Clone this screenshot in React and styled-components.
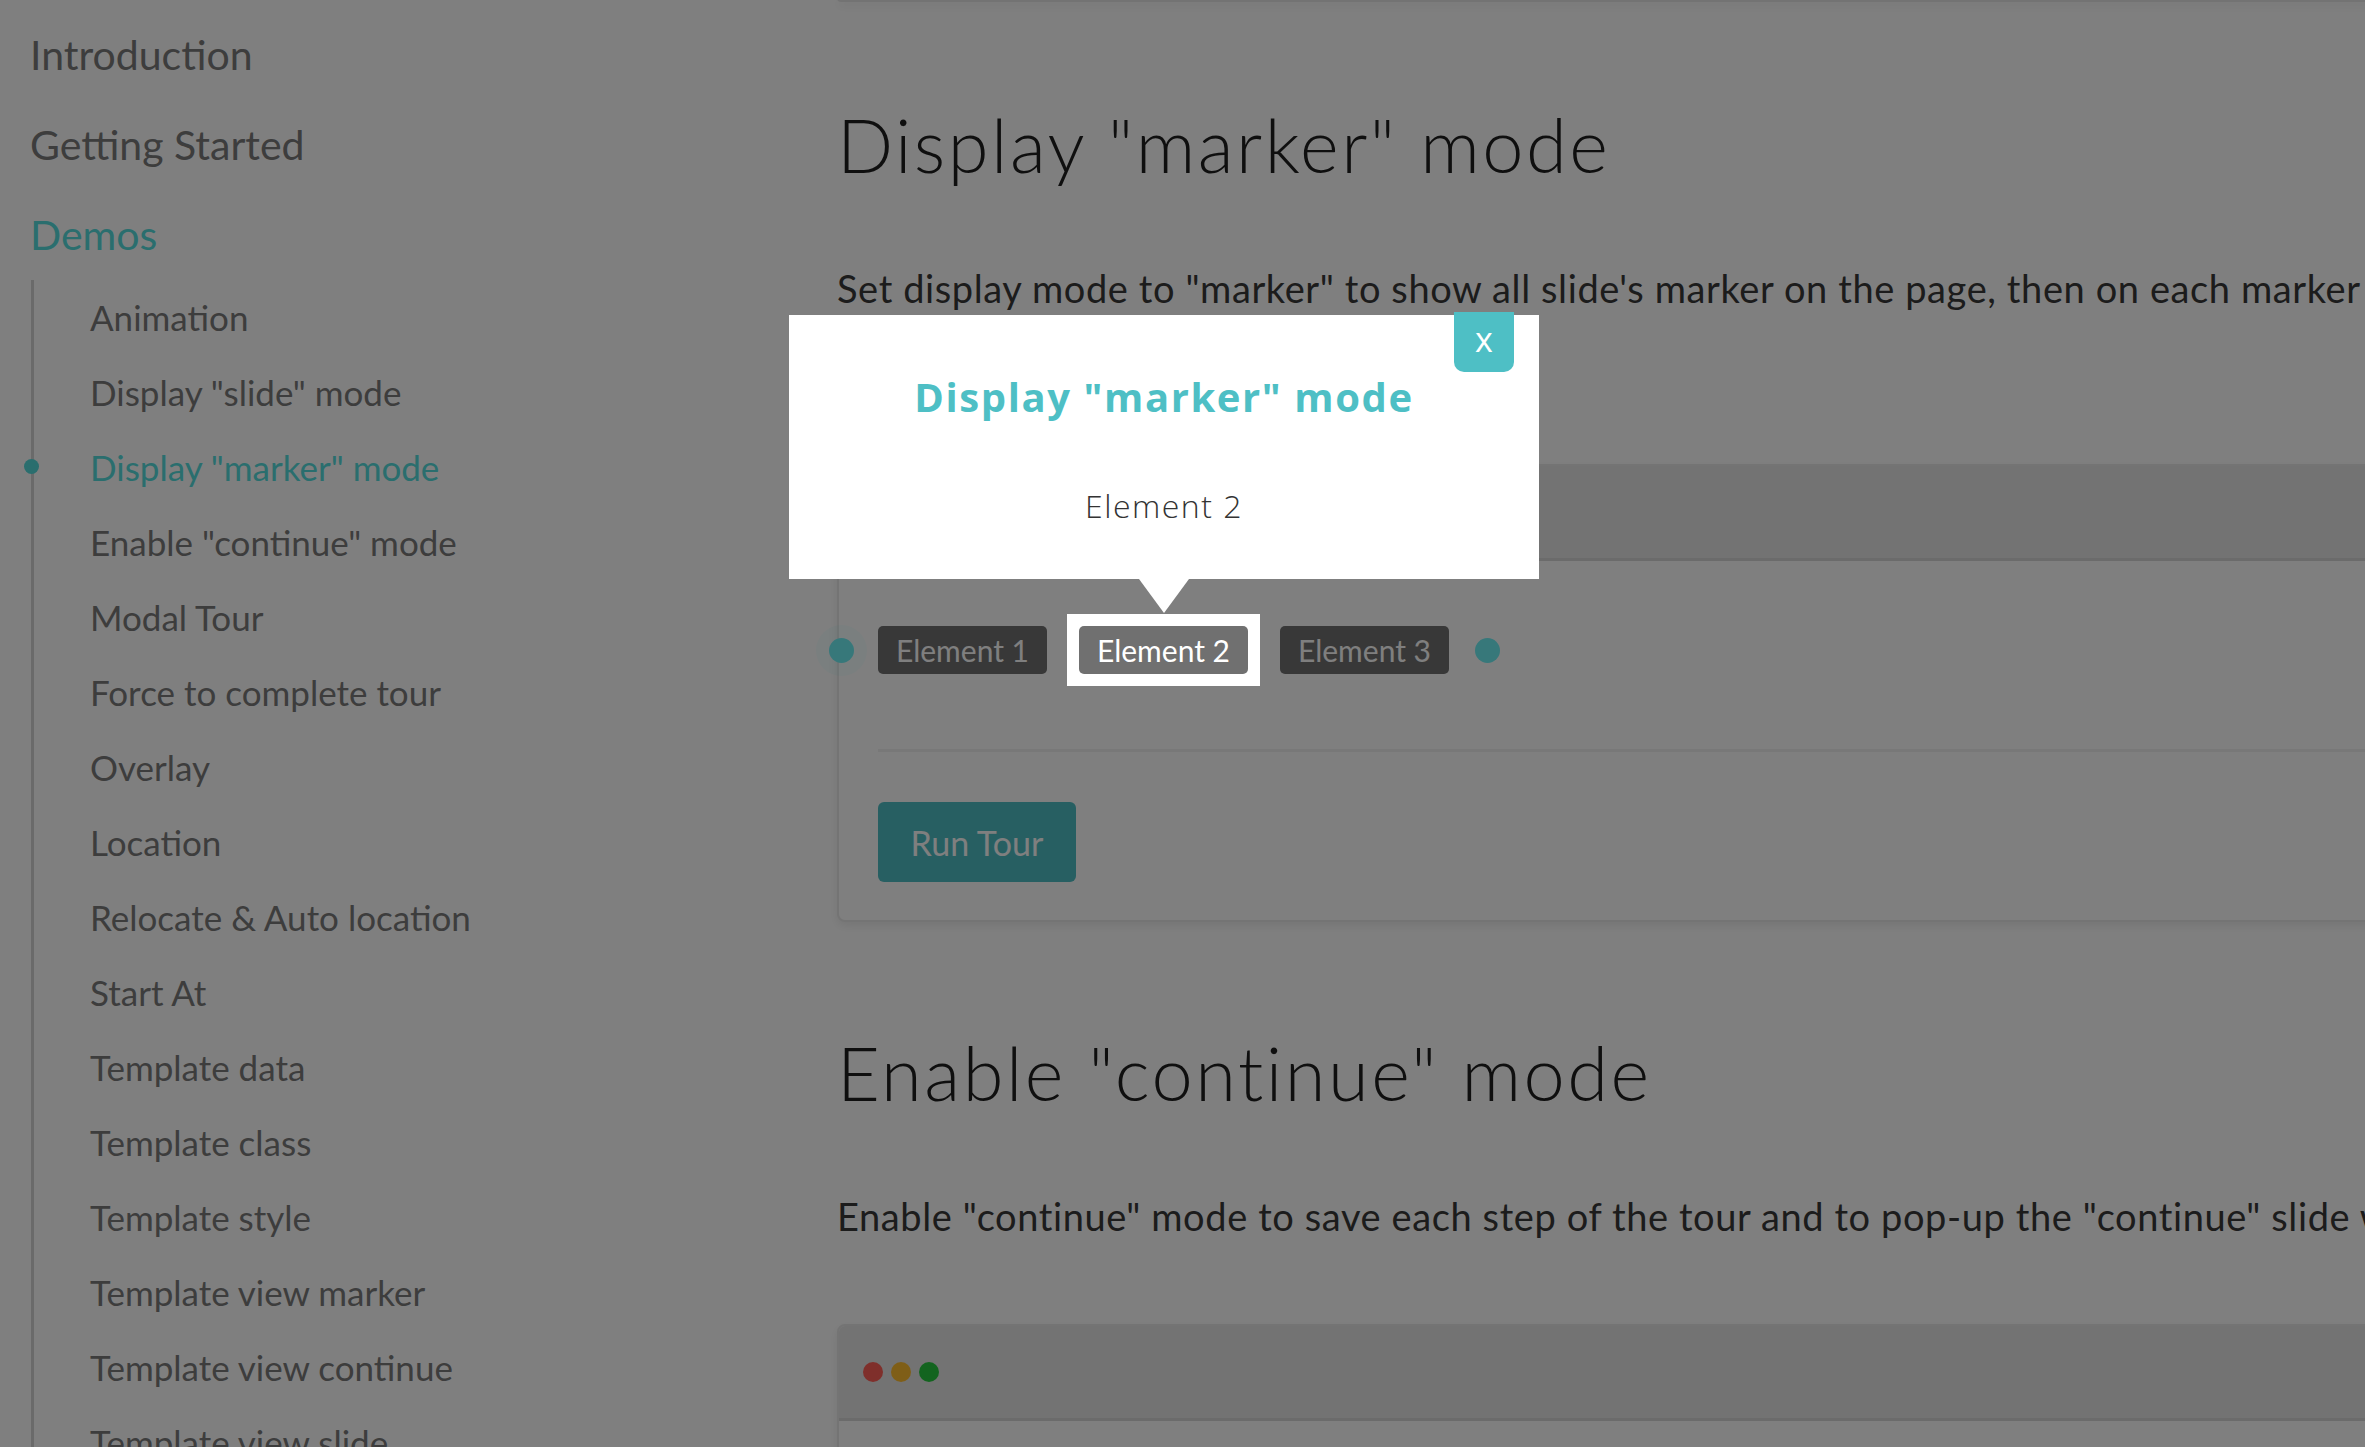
import React from "react";
import styled, { createGlobalStyle } from "styled-components";

const TEAL = "#4ebfc5";
const NAV_TEAL = "#54dcdc";

const GlobalStyle = createGlobalStyle`
  html, body {
    margin: 0;
    padding: 0;
    background: #fff;
  }
  body {
    font-family: Lato, "Liberation Sans", sans-serif;
  }
  * {
    box-sizing: border-box;
  }
`;

const topLinks = [
  { label: "Introduction" },
  { label: "Getting Started" },
  { label: "Demos", active: true },
];

const demoLinks = [
  "Animation",
  'Display "slide" mode',
  'Display "marker" mode',
  'Enable "continue" mode',
  "Modal Tour",
  "Force to complete tour",
  "Overlay",
  "Location",
  "Relocate & Auto location",
  "Start At",
  "Template data",
  "Template class",
  "Template style",
  "Template view marker",
  "Template view continue",
  "Template view slide",
];

const App = () => {
  return (
    <>
      <GlobalStyle />
      <Page>
        <Sidebar>
          {topLinks.map((l) => (
            <TopLink key={l.label} $active={l.active}>
              {l.label}
            </TopLink>
          ))}
          <SubList>
            {demoLinks.map((l) => (
              <SubLink key={l} $active={l === 'Display "marker" mode'}>
                {l}
              </SubLink>
            ))}
          </SubList>
        </Sidebar>

        <Main>
          <PrevCard />
          <Section $top={98}>
            <Heading>Display "marker" mode</Heading>
            <Lead $lines={2}>
              Set display mode to "marker" to show all slide's marker on the
              page, then on each marker
            </Lead>
            <Card>
              <CardHeader />
              <CardBody>
                <ElementRow>
                  <Marker $side="left" />
                  <ElementButton>Element 1</ElementButton>
                  <Highlight>
                    <ElementButton>Element 2</ElementButton>
                  </Highlight>
                  <ElementButton>Element 3</ElementButton>
                  <Marker $side="right" />
                </ElementRow>
                <Divider />
                <RunButton>Run Tour</RunButton>
              </CardBody>
            </Card>
          </Section>

          <Section $top={106}>
            <Heading>Enable "continue" mode</Heading>
            <Lead $lines={1}>
              Enable "continue" mode to save each step of the tour and to
              pop-up the "continue" slide when
            </Lead>
            <Card>
              <CardHeader>
                <Light $color="#ff5f56" />
                <Light $color="#ffbd2e" />
                <Light $color="#27c93f" />
              </CardHeader>
              <CardBody />
            </Card>
          </Section>
        </Main>

        <Overlay />

        <Popup>
          <CloseButton>x</CloseButton>
          <PopupTitle>Display "marker" mode</PopupTitle>
          <PopupText>Element 2</PopupText>
        </Popup>
      </Page>
    </>
  );
};

export default App;

const Page = styled.div`
  position: relative;
  display: grid;
  grid-template-columns: 837px 1800px;
  height: 100vh;
  overflow: hidden;
`;

const Sidebar = styled.nav`
  padding: 10px 0 0 30px;
`;

const TopLink = styled.div`
  font-size: 41px;
  line-height: 90px;
  color: ${(p) => (p.$active ? NAV_TEAL : "#7a7a7a")};
`;

const SubList = styled.div`
  margin-left: 1px;
  border-left: 3px solid #d4d4d4;
  padding-left: 56px;
  padding-bottom: 200px;
`;

const SubLink = styled.div`
  position: relative;
  font-size: 35px;
  line-height: 75px;
  white-space: nowrap;
  color: ${(p) => (p.$active ? NAV_TEAL : "#7a7a7a")};

  &::before {
    content: "";
    display: ${(p) => (p.$active ? "block" : "none")};
    position: absolute;
    left: -66px;
    top: 50%;
    width: 15px;
    height: 15px;
    margin-top: -9px;
    border-radius: 50%;
    background: ${NAV_TEAL};
  }
`;

const Main = styled.main`
  min-width: 0;
`;

const PrevCard = styled.div`
  height: 4px;
  margin-top: -2px;
  background: #fff;
  border: 2px solid #e6e6e6;
  border-top: none;
  border-radius: 0 0 8px 8px;
  box-shadow: 0 4px 10px rgba(0, 0, 0, 0.08);
`;

const Section = styled.section`
  padding-top: ${(p) => p.$top}px;
`;

const Heading = styled.h1`
  margin: 0 0 65px;
  font-size: 74px;
  line-height: 89px;
  font-weight: 300;
  letter-spacing: 2.5px;
  color: #1e1e1e;
  white-space: nowrap;
`;

const Lead = styled.p`
  margin: 0 0 74px;
  font-size: 38px;
  line-height: 68px;
  letter-spacing: 0.6px;
  color: #383838;
  white-space: nowrap;
  min-height: ${(p) => p.$lines * 68}px;
`;

const Card = styled.div`
  background: #fff;
  border: 2px solid #e8e8e8;
  border-radius: 8px;
  box-shadow: 0 4px 10px rgba(0, 0, 0, 0.08);
`;

const CardHeader = styled.div`
  height: 95px;
  display: flex;
  align-items: center;
  gap: 8px;
  padding-left: 24px;
  background: #e6e6e6;
  border-bottom: 3px solid #d6d6d6;
  border-radius: 6px 6px 0 0;
`;

const Light = styled.span`
  width: 20px;
  height: 20px;
  border-radius: 50%;
  background: ${(p) => p.$color};
`;

const CardBody = styled.div`
  padding: 53px 39px 38px;
  min-height: 300px;
`;

const ElementRow = styled.div`
  display: flex;
  align-items: center;
  gap: 20px;
  margin-left: -49px;
`;

const Marker = styled.span`
  width: 25px;
  height: 25px;
  border-radius: 50%;
  background: #6ff0f5;
  margin: ${(p) => (p.$side === "left" ? "0 4px 0 0" : "0 0 0 6px")};
  box-shadow: ${(p) =>
    p.$side === "left" ? "0 0 0 13px rgba(111, 240, 245, 0.08)" : "none"};
`;

const ElementButton = styled.button`
  height: 48px;
  padding: 0 18px;
  border: none;
  border-radius: 5px;
  background: #707070;
  color: #fff;
  font-family: Lato, "Liberation Sans", sans-serif;
  font-size: 30px;
  line-height: 48px;
`;

const Highlight = styled.div`
  position: relative;
  z-index: 101;
  display: flex;
  padding: 12px;
  background: #fff;
`;

const Divider = styled.div`
  height: 3px;
  margin: 63px -200px 50px 0;
  background: #f0f0f0;
`;

const RunButton = styled.button`
  width: 198px;
  height: 80px;
  border: none;
  border-radius: 6px;
  background: ${TEAL};
  color: #fff;
  font-family: Lato, "Liberation Sans", sans-serif;
  font-size: 34px;
`;

const Overlay = styled.div`
  position: fixed;
  inset: 0;
  z-index: 100;
  background: rgba(0, 0, 0, 0.5);
`;

const Popup = styled.div`
  position: absolute;
  left: 789px;
  top: 315px;
  z-index: 102;
  width: 750px;
  height: 264px;
  padding: 58px 20px 0;
  background: #fff;
  text-align: center;
  font-family: "Open Sans", "Noto Sans", sans-serif;

  &::after {
    content: "";
    position: absolute;
    left: 50%;
    bottom: -34px;
    margin-left: -25px;
    border-left: 25px solid transparent;
    border-right: 25px solid transparent;
    border-top: 34px solid #fff;
  }
`;

const CloseButton = styled.button`
  position: absolute;
  top: -3px;
  right: 25px;
  width: 60px;
  height: 60px;
  padding: 0 0 6px;
  border: none;
  border-radius: 0 0 10px 10px;
  background: ${TEAL};
  color: #fff;
  font-family: "Open Sans", "Noto Sans", sans-serif;
  font-size: 34px;
  line-height: 1;
`;

const PopupTitle = styled.div`
  margin-bottom: 62px;
  font-size: 40px;
  line-height: 48px;
  font-weight: 700;
  letter-spacing: 1.6px;
  color: ${TEAL};
`;

const PopupText = styled.div`
  font-size: 32px;
  line-height: 46px;
  font-weight: 300;
  letter-spacing: 1.5px;
  color: #333;
`;
